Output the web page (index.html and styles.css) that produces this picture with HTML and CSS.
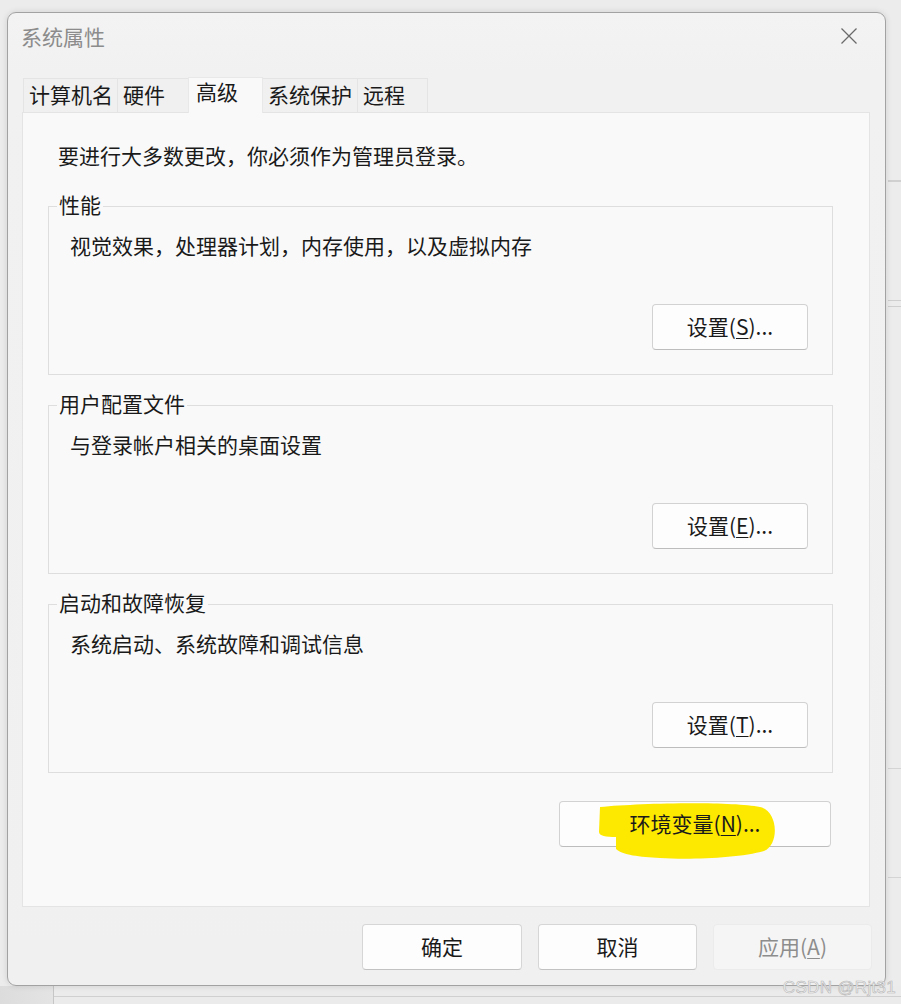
FILE: index.html
```html
<!DOCTYPE html>
<html lang="zh-CN">
<head>
<meta charset="utf-8">
<title>系统属性</title>
<link rel="stylesheet" href="styles.css">
</head>
<body>
<div class="window">
  <div class="titlebar">
    <span class="title">系统属性</span>
    <span class="close">
      <svg width="18" height="18" viewBox="0 0 18 18"><path d="M1.5 1.5 L16.5 16.5 M16.5 1.5 L1.5 16.5" stroke="#6a6a6a" stroke-width="1.3" fill="none"/></svg>
    </span>
  </div>
  <div class="tabs">
    <div class="tab t1">计算机名</div>
    <div class="tab t2">硬件</div>
    <div class="tab t3 active">高级</div>
    <div class="tab t4">系统保护</div>
    <div class="tab t5">远程</div>
  </div>
  <div class="panel">
    <p class="intro">要进行大多数更改，你必须作为管理员登录。</p>
    <fieldset class="group">
      <legend>性能</legend>
      <div class="desc">视觉效果，处理器计划，内存使用，以及虚拟内存</div>
      <div class="group-actions"><button class="btn">设置(<u>S</u>)...</button></div>
    </fieldset>
    <fieldset class="group">
      <legend>用户配置文件</legend>
      <div class="desc">与登录帐户相关的桌面设置</div>
      <div class="group-actions"><button class="btn">设置(<u>E</u>)...</button></div>
    </fieldset>
    <fieldset class="group last">
      <legend>启动和故障恢复</legend>
      <div class="desc">系统启动、系统故障和调试信息</div>
      <div class="group-actions"><button class="btn">设置(<u>T</u>)...</button></div>
    </fieldset>
    <div class="env-row">
      <button class="btn env">
        <svg class="marker" width="230" height="62" viewBox="0 0 230 62"><path d="M40 5 C80 1 170 -1 200 5 C218 9 220 42 204 49 C180 56 130 58 100 56 C80 55 62 53 56 47 L56 35 C46 35 39 34 39 30 Z" fill="#fde800"/></svg>
        <span class="label">环境变量(<u>N</u>)...</span>
      </button>
    </div>
  </div>
  <div class="footer">
    <button class="btn fbtn ok">确定</button>
    <button class="btn fbtn">取消</button>
    <button class="btn fbtn disabled">应用(<u>A</u>)</button>
  </div>
</div>
<div class="watermark">CSDN @Rjt31</div>
</body>
</html>
```
FILE: styles.css
```css
html, body {
  margin: 0;
  padding: 0;
}
body {
  width: 901px;
  height: 1004px;
  overflow: hidden;
  position: relative;
  font-family: "Noto Sans CJK SC", "Noto Sans", sans-serif;
  color: #1a1a1a;
  background:
    linear-gradient(#d0d0d0, #d0d0d0) 888px 180px / 13px 2px no-repeat,
    linear-gradient(#cfcfcf, #cfcfcf) 888px 300px / 13px 1px no-repeat,
    linear-gradient(#cfcfcf, #cfcfcf) 888px 306px / 13px 1px no-repeat,
    linear-gradient(#d4d4d4, #d4d4d4) 888px 768px / 13px 1px no-repeat,
    linear-gradient(#d4d4d4, #d4d4d4) 888px 877px / 13px 1px no-repeat,
    linear-gradient(#c6c6c6, #c6c6c6) 53px 986px / 1px 18px no-repeat,
    linear-gradient(#d0d0d0, #d0d0d0) 53px 996px / 848px 1px no-repeat,
    linear-gradient(90deg, #dcdcdc 0, #e4e4e4 53px, #ebebeb 54px) 0 986px / 901px 18px no-repeat,
    #ececec;
}

.window {
  box-sizing: border-box;
  width: 879px;
  height: 974px;
  margin: 12px 0 0 7px;
  border: 1px solid #a2a2a2;
  border-radius: 9px;
  background: linear-gradient(#f3f3f3 0, #f1f1f1 60px, #f0f0f0 100%);
  box-shadow: 0 0 6px rgba(0, 0, 0, 0.12);
  display: flex;
  flex-direction: column;
}

.titlebar {
  box-sizing: border-box;
  height: 49px;
  display: flex;
  align-items: center;
  justify-content: space-between;
  padding: 0 27px 4px 13px;
}
.title {
  font-size: 21px;
  line-height: 26px;
  color: #8c8c8c;
}
.close {
  display: flex;
  width: 18px;
  height: 18px;
}

.tabs {
  display: flex;
  align-items: flex-end;
  height: 35px;
  margin-top: 15px;
  padding-left: 15px;
}
.tab {
  box-sizing: border-box;
  height: 34px;
  border: 1px solid #e4e4e4;
  border-bottom: none;
  background: #f0f0f0;
  padding-left: 5px;
  font-size: 21px;
  line-height: 30px;
  white-space: nowrap;
  color: #1a1a1a;
}
.t1 { width: 95px; }
.t2 { width: 72px; margin-left: -1px; }
.t3 { width: 75px; margin-left: -1px; }
.t4 { width: 96px; margin-left: -1px; }
.t5 { width: 71px; margin-left: -1px; }
.tab.active {
  height: 36px;
  margin-bottom: -1px;
  background: #f9f9f9;
  border-color: #e8e8e8;
  padding-left: 7px;
  line-height: 26px;
  position: relative;
  z-index: 1;
}

.panel {
  box-sizing: border-box;
  height: 795px;
  margin: 0 15px 0 14px;
  border: 1px solid #e4e4e4;
  background: #f9f9f9;
  padding: 29px 36px 0 25px;
}
.intro {
  margin: 0 0 25px 10px;
  font-size: 21px;
  line-height: 26px;
}

.group {
  margin: 0 0 17px 0;
  padding: 13px 24px 24px 21px;
  border: 1px solid #dedede;
  min-width: 0;
}
.group.last {
  margin-bottom: 0;
}
.group legend {
  margin-left: -13px;
  padding: 0 2px 4px;
  font-size: 21px;
  line-height: 22px;
}
.desc {
  font-size: 21px;
  line-height: 26px;
}
.group-actions {
  display: flex;
  justify-content: flex-end;
  margin-top: 46px;
}

.btn {
  box-sizing: border-box;
  width: 156px;
  height: 46px;
  border: 1px solid #d2d2d2;
  border-bottom-color: #bdbdbd;
  border-radius: 4px;
  background: #fdfdfd;
  font-family: "Noto Sans CJK SC", "Noto Sans", sans-serif;
  font-size: 21px;
  color: #1a1a1a;
  padding: 0 0 3px;
  line-height: 26px;
}
.btn u {
  text-decoration-thickness: 1px;
  text-underline-offset: 3px;
}

.env-row {
  display: flex;
  justify-content: flex-end;
  margin-top: 28px;
  margin-right: 2px;
}
.btn.env {
  width: 272px;
  position: relative;
}
.marker {
  position: absolute;
  left: 0;
  top: 0;
  overflow: visible;
}
.env .label {
  position: relative;
}

.footer {
  display: flex;
  justify-content: flex-end;
  gap: 16px;
  margin-top: 17px;
  padding-right: 13px;
}
.fbtn {
  width: 159px;
  border-color: #d6d6d6;
  border-bottom-color: #c2c2c2;
}
.fbtn.ok {
  width: 160px;
}
.fbtn.disabled {
  background: #f5f5f5;
  border-color: #ebebeb;
  color: #8d8d8d;
}

.watermark {
  position: absolute;
  right: 5px;
  bottom: 6px;
  font-family: "Liberation Sans", "Noto Sans", sans-serif;
  font-size: 17px;
  line-height: 20px;
  color: #f4f4f4;
  -webkit-text-stroke: 0.6px #b5b5b5;
  letter-spacing: 0.3px;
}
```
